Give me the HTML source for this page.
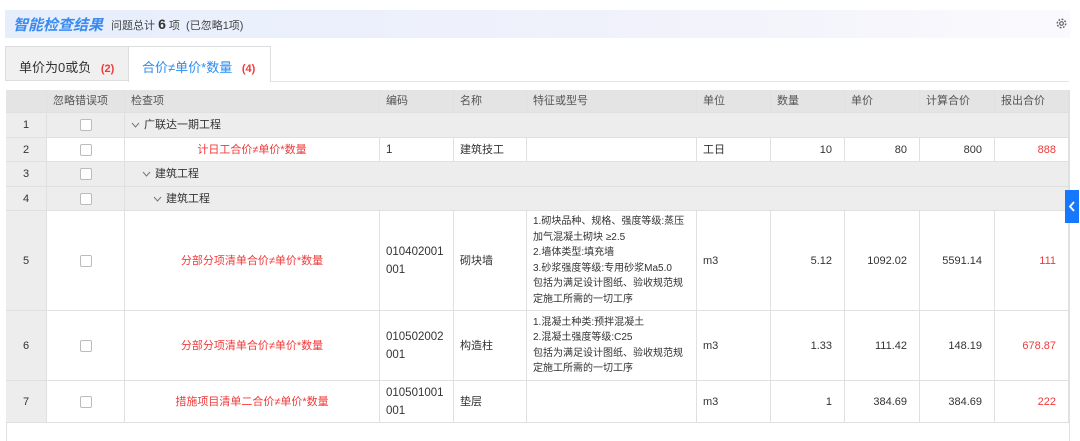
<!DOCTYPE html><html><head><meta charset="utf-8"><style>
*{margin:0;padding:0;box-sizing:border-box}
body{width:1080px;height:441px;background:#fff;font-family:"Liberation Sans","Noto Sans CJK SC",sans-serif;font-size:11px;color:#333;position:relative;overflow:hidden}
.a{position:absolute}
.hdr{left:5px;top:10px;width:1065px;height:28px;background:linear-gradient(90deg,#e6eefc,#f3f3fb 70%,#fafafe)}
.c{position:absolute;border-right:1px solid #e0e0e0;border-bottom:1px solid #e0e0e0;display:flex;align-items:center;padding:0 6px;line-height:16px}
.cb{width:12px;height:12px;border:1px solid #bbb;border-radius:2px;background:#fff}
.red{color:#f03a3a}
</style></head><body>
<div class="a hdr"></div>
<div class="a" style="left:13px;top:14px;font-size:15px;font-weight:bold;font-style:italic;color:#3a8bf0">智能检查结果</div>
<div class="a" style="left:111px;top:16px;font-size:11px;color:#444">问题总计 <b style="font-size:14px;color:#333">6</b> 项 &nbsp;(已忽略1项)</div>
<svg class="a" style="left:1056px;top:18px" width="11" height="11" viewBox="0 0 12 12"><circle cx="6" cy="6" r="2" fill="none" stroke="#666" stroke-width="1.3"/><circle cx="6" cy="6" r="4.6" fill="none" stroke="#666" stroke-width="1.6" stroke-dasharray="2 1.6"/></svg>
<div class="a" style="left:5px;top:46px;width:124px;height:35px;background:#f0f0f0;border:1px solid #ddd"></div>
<div class="a" style="left:19px;top:57px;font-size:13px;color:#333">单价为0或负 <span class="red" style="font-size:11px;font-weight:bold;margin-left:6px">(2)</span></div>
<div class="a" style="left:128px;top:46px;width:143px;height:36px;background:#fff;border:1px solid #ddd;border-bottom:none"></div>
<div class="a" style="left:142px;top:57px;font-size:13px;color:#2d8cf0">合价≠单价*数量 <span class="red" style="font-size:11px;font-weight:bold;margin-left:6px">(4)</span></div>
<div class="a" style="left:271px;top:81px;width:798px;height:1px;background:#e4e4e4"></div>
<div class="a" style="left:6px;top:90px;width:1064px;height:351px;border-left:1px solid #e0e0e0;border-right:1px solid #e0e0e0"></div>
<div id="t"></div>
<div class="a" style="left:1065px;top:190px;width:14px;height:33px;background:#1677ff"></div>
<svg class="a" style="left:1065px;top:190px" width="14" height="33"><path d="M9 12 L5 16.5 L9 21" fill="none" stroke="#fff" stroke-width="1.8"/></svg>
<script>
var X=[6,47,125,380,454,527,697,771,845,920,995,1069];
var Y=[90,113,138,162,187,211,311,381,423];
var rows=[
["","忽略错误项","检查项","编码","名称","特征或型号","单位","数量","单价","计算合价","报出合价"],
["1","cb","g0|广联达一期工程"],
["2","cb","r|计日工合价≠单价*数量","1","建筑技工","","工日","10","80","800","888"],
["3","cb","g1|建筑工程"],
["4","cb","g2|建筑工程"],
["5","cb","r|分部分项清单合价≠单价*数量","010402001<br>001","砌块墙","1.砌块品种、规格、强度等级:蒸压加气混凝土砌块 ≥2.5<br>2.墙体类型:填充墙<br>3.砂浆强度等级:专用砂浆Ma5.0<br>包括为满足设计图纸、验收规范规定施工所需的一切工序","m3","5.12","1092.02","5591.14","111"],
["6","cb","r|分部分项清单合价≠单价*数量","010502002<br>001","构造柱","1.混凝土种类:预拌混凝土<br>2.混凝土强度等级:C25<br>包括为满足设计图纸、验收规范规定施工所需的一切工序","m3","1.33","111.42","148.19","678.87"],
["7","cb","r|措施项目清单二合价≠单价*数量","010501001<br>001","垫层","","m3","1","384.69","384.69","222"]];
var h="";
rows.forEach(function(r,i){
 var y=Y[i],hh=Y[i+1]-y,hd=i==0,grp=r.length==3;
 for(var j=0;j<11;j++){
  var x=X[j],w=X[j+1]-x,v=r[j]||"",st="left:"+x+"px;top:"+y+"px;width:"+w+"px;height:"+hh+"px;";
  var bg=hd?"#e4e4e4":(j==0||grp)?"#ededed":"#fff";
  if(grp&&j>2)continue;
  if(grp&&j==2){w=X[11]-x;st="left:"+x+"px;top:"+y+"px;width:"+w+"px;height:"+hh+"px;";}
  st+="background:"+bg+";";
  var al="";
  if(!hd){if(j<2)al="justify-content:center;";if(j>=7)al="justify-content:flex-end;padding-right:12px;";}
  else st+="color:#555;";
  var cls="c",inner=v;
  if(v=="cb")inner='<div class="cb"></div>';
  if(v.indexOf("r|")==0){inner=v.slice(2);cls+=" red";al="justify-content:center;";}
  if(v.indexOf("g")==0&&v[2]=="|"){var lv=+v[1];inner='<svg style="margin-left:'+(lv*11)+'px;margin-right:4px" width="9" height="6"><path d="M1 1 L4.5 5 L8 1" fill="none" stroke="#777" stroke-width="1"/></svg>'+v.slice(3);al="";}
  if(j==10&&!hd&&v)cls+=" red";
  if(j==5&&!hd)st+="font-size:10px;line-height:15.5px;";
  if(j==3&&!hd)st+="font-size:11.5px;line-height:18px;";
  h+='<div class="'+cls+'" style="'+st+al+'">'+inner+'</div>';
 }
});
document.getElementById("t").innerHTML=h;
</script>
</body></html>
